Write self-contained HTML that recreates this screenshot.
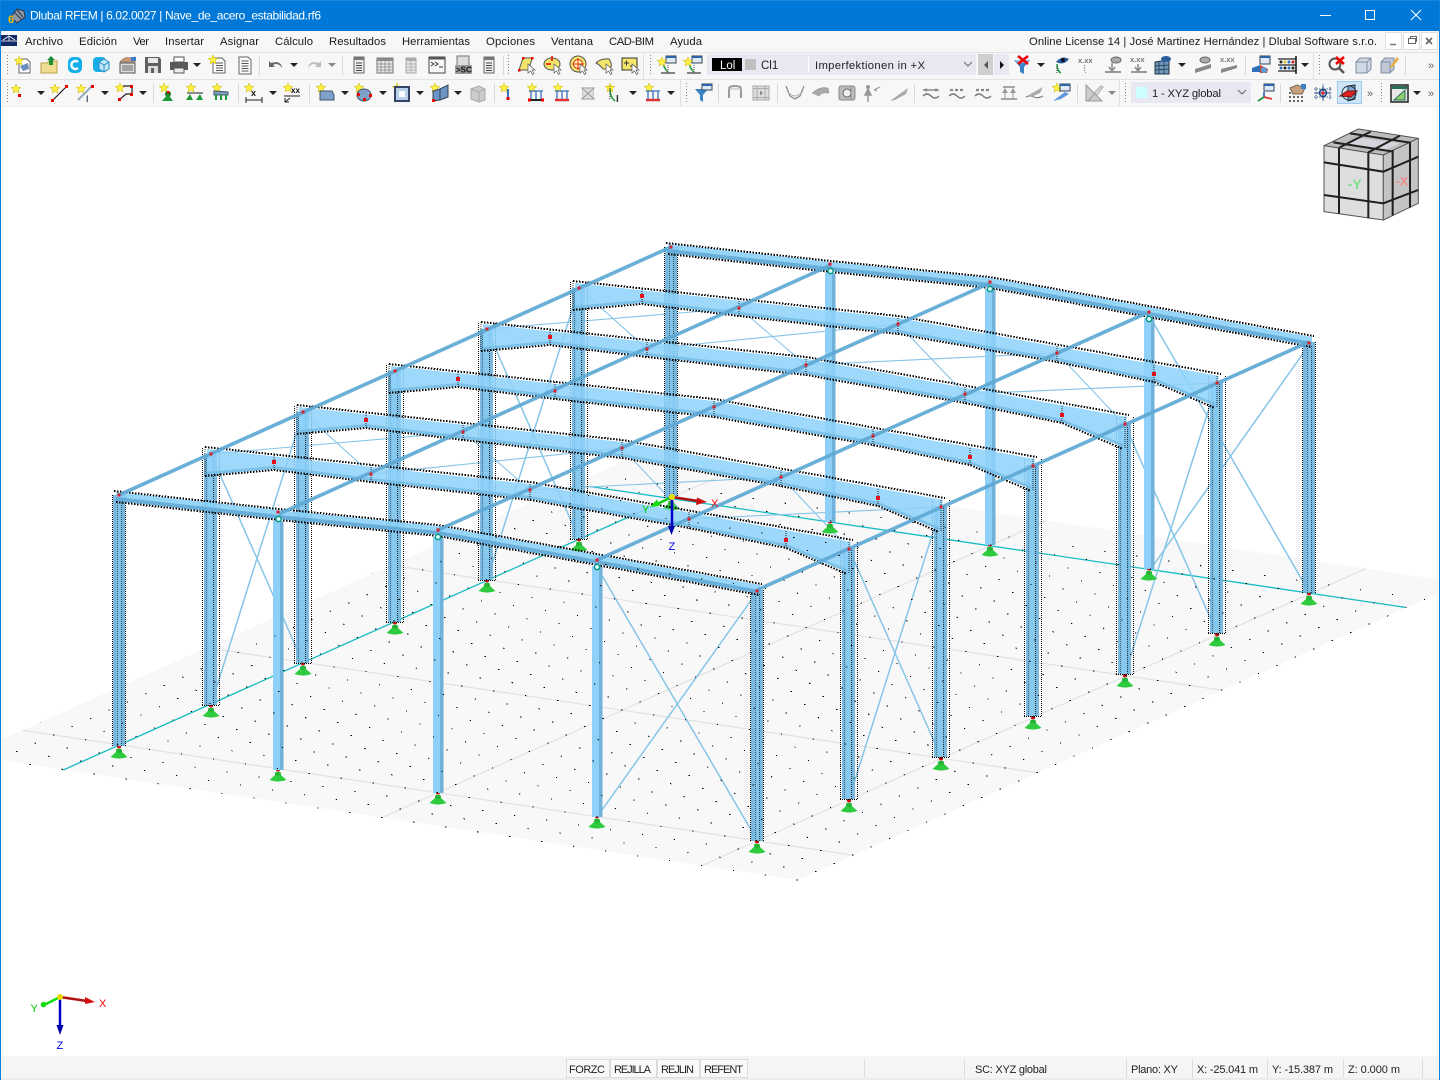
<!DOCTYPE html>
<html lang="es"><head><meta charset="utf-8"><title>Dlubal RFEM</title>
<style>
html,body{margin:0;padding:0;background:#fff;overflow:hidden}
svg{display:block;font-family:"Liberation Sans",sans-serif}
.m{font-size:11.3px;fill:#1a1a1a}
.s{font-size:11px;fill:#222}
.d{shape-rendering:crispEdges}
</style></head><body>
<svg width="1440" height="1080" viewBox="0 0 1440 1080" xmlns="http://www.w3.org/2000/svg">
<defs>
<polygon id="st" points="5,0 6.2,3 9.8,3.4 7.2,5.6 8,9 5,7.2 2,9 2.8,5.6 .2,3.4 3.8,3" fill="#ffee44" stroke="#c9b800" stroke-width=".5"/>
<path id="dd" d="M-4-2h8l-4 4z" fill="#222"/>
<path id="dg" d="M-4-2h8l-4 4z" fill="#888"/>
<g id="i-new"><path d="M6 4h8l3 3v11H6z" fill="#fff" stroke="#666"/><path d="M7 11l8-3 1 6-6 2z" fill="#6d8fc0"/><use href="#st" x="1" y="1"/></g>
<g id="i-fold"><path d="M2 8h6l2-2h8v12H2z" fill="#f0dc90" stroke="#b89f50"/><path d="M12 1l4 4h-2v5h-4V5H8z" fill="#1d8f3a"/></g>
<g id="i-c"><rect x="3" y="2" width="14" height="16" rx="5" fill="#12aee8"/><path d="M13 7a4 4 0 1 0 0 6" fill="none" stroke="#fff" stroke-width="2.4"/></g>
<g id="i-cube"><rect x="2" y="2" width="13" height="15" rx="4" fill="#15aee6"/><path d="M8 7l5-3 5 3v7l-5 3-5-3z" fill="#bfe7f7" stroke="#2a8cc0"/><path d="M8 7l5 3 5-3M13 10v7" fill="none" stroke="#2a8cc0"/></g>
<g id="i-hand"><rect x="3" y="8" width="15" height="10" fill="#ddd" stroke="#555"/><path d="M5 11h11M5 13h11M5 15h11" stroke="#666"/><path d="M3 7q5-6 10-4l5-1v5H5z" fill="#c69878" stroke="#7a5a45" stroke-width=".6"/><path d="M14 2h5v4h-5z" fill="#3d7fc4"/></g>
<g id="i-save"><path d="M2 2h14l2 2v14H2z" fill="#606060"/><rect x="5" y="3" width="10" height="5" fill="#e8e8e8"/><rect x="5" y="11" width="10" height="7" fill="#ddd"/><rect x="8" y="13" width="3" height="5" fill="#606060"/></g>
<g id="i-print"><rect x="5" y="2" width="10" height="5" fill="#fff" stroke="#555"/><path d="M1 7h18v8h-4v-2H5v2H1z" fill="#5a5a5a"/><rect x="5" y="13" width="10" height="5" fill="#eee" stroke="#555"/></g>
<g id="i-docn"><path d="M5 3h9l3 3v12H5z" fill="#fafafa" stroke="#666"/><path d="M8 8h7M8 10.500h7M8 13h7M8 15.500h7" stroke="#555"/><use href="#st" x="0" y="0"/></g>
<g id="i-doc"><path d="M4 2h9l3 3v14H4z" fill="#fafafa" stroke="#666"/><path d="M6.500 6h7M6.500 8.500h7M6.500 11h7M6.500 13.500h7M6.500 16h7" stroke="#555"/></g>
<g id="i-undo"><path d="M3 6v6h6l-2-2q5-3 9 3-1-8-11-5z" fill="#666"/></g>
<g id="i-redo"><path d="M17 6v6h-6l2-2q-5-3-9 3 1-8 11-5z" fill="#bbb"/></g>
<g id="i-t1"><rect x="5" y="2" width="10" height="16" fill="#eee" stroke="#666"/><rect x="5" y="2" width="10" height="3" fill="#777"/><path d="M7 8h6M7 10.500h6M7 13h6M7 15.500h6" stroke="#444"/></g>
<g id="i-t2"><rect x="2" y="3" width="16" height="15" fill="#e8e8e8" stroke="#777"/><rect x="2" y="3" width="16" height="3" fill="#888"/><path d="M2 9h16M2 12h16M2 15h16M6 6v12M10 6v12M14 6v12" stroke="#888" stroke-width=".8"/></g>
<g id="i-t3"><rect x="5" y="3" width="10" height="15" fill="#e4e4e4" stroke="#aaa"/><rect x="5" y="3" width="10" height="3" fill="#aaa"/><path d="M5 9h10M5 12h10M5 15h10M10 6v12" stroke="#aaa" stroke-width=".8"/></g>
<g id="i-term"><rect x="2" y="2" width="16" height="16" fill="#f8f8f8" stroke="#444"/><rect x="2" y="2" width="16" height="2.500" fill="#555"/><path d="M4 7l3 2-3 2M8 7l3 2-3 2M12 12h4" fill="none" stroke="#333"/></g>
<g id="i-sc"><rect x="4" y="1" width="12" height="10" fill="#ddd" stroke="#777"/><rect x="2" y="10" width="17" height="9" rx="1" fill="#999"/><text x="3" y="17.500" font-size="8" font-weight="bold" fill="#111">&gt;SC</text></g>
<g id="cur"><path d="M11 9v9l2.500-2 2 3.500 1.500-1-2-3.500h3z" fill="#fff" stroke="#555" stroke-width=".7"/></g>
<g id="y1"><path d="M6 3h9l-3 12H2z" fill="#f3e46a" stroke="#555"/><rect x="5" y="2" width="2.500" height="2.500" fill="#e00"/><rect x="14" y="2" width="2.500" height="2.500" fill="#e00"/><rect x="1" y="14" width="2.500" height="2.500" fill="#e00"/><use href="#cur"/></g>
<g id="y2"><ellipse cx="9" cy="9" rx="8" ry="6" fill="#f3e46a" stroke="#555"/><path d="M9 1v5M3 9h5" stroke="#e00" stroke-width="1.500"/><use href="#cur"/></g>
<g id="y3"><circle cx="9" cy="9" r="8" fill="#f3e46a" stroke="#555"/><circle cx="9" cy="9" r="4.500" fill="#fff4a0" stroke="#c33"/><path d="M9 3v12M3 9h12" stroke="#e00" stroke-width=".8"/><use href="#cur"/></g>
<g id="y4"><path d="M1 8q5-5 13-4 4 6 1 10H8q-3-4-7-6z" fill="#f3e46a" stroke="#555"/><use href="#cur"/></g>
<g id="y5"><rect x="1" y="3" width="15" height="12" fill="#f3e46a" stroke="#333"/><path d="M3 8h5M5.500 5.500v5M9 11h5" stroke="#333"/><use href="#cur"/></g>
<g id="w1"><path d="M4 18h14" stroke="#111"/><rect x="9" y="1" width="10" height="7" fill="#dfe8f5" stroke="#345"/><rect x="9" y="1" width="10" height="2" fill="#2d63a8"/><path d="M6 5q0 8 5 12" fill="none" stroke="#1c9a3c" stroke-width="1.500"/><use href="#st" x="0" y="2"/><path d="M11 10v8" stroke="#555" stroke-dasharray="1 1"/></g>
<g id="i-fx"><path d="M2 5h16l-6 7v7l-4-2v-5z" fill="#3b83c9"/><path d="M3 5h14l-3 3H6z" fill="#9cc8ec"/></g>
<g id="i-eye"><path d="M6 9q0 7 4 9" fill="none" stroke="#1c9a3c" stroke-width="1.600"/><path d="M5 7q6-7 13-3-5 7-13 3z" fill="#2b5d9e"/><circle cx="12" cy="5" r="2" fill="#112"/><path d="M6 11v7" stroke="#333" stroke-dasharray="1 1"/></g>
<g id="i-xxx"><text x="1" y="8" font-size="7.500" font-weight="bold" fill="#777">x.xx</text><path d="M8 10q-2 4 1 8" fill="none" stroke="#888" stroke-dasharray="1.500 1"/></g>
<g id="i-up"><path d="M2 17h16" stroke="#999" stroke-width="2"/><path d="M9 8v6M6 12l3 4 3-4" fill="none" stroke="#888" stroke-width="1.500"/><ellipse cx="13" cy="5" rx="5" ry="3" fill="#aaa" stroke="#666"/></g>
<g id="i-upx"><path d="M2 17h16" stroke="#999" stroke-width="2"/><path d="M9 9v6M6 12l3 4 3-4" fill="none" stroke="#888" stroke-width="1.500"/><text x="1" y="7" font-size="7.500" font-weight="bold" fill="#777">x.xx</text></g>
<g id="i-grid"><path d="M2 7l14-2v14H2z" fill="#6d97bd" stroke="#234"/><path d="M6 6.500V19M11 6V19M2 11l14-1M2 15l14-1" stroke="#234" stroke-width=".7"/><ellipse cx="13" cy="4" rx="5" ry="3" fill="#2b5d9e"/></g>
<g id="i-sl1"><path d="M2 14l16-5v4l-16 5z" fill="#888"/><ellipse cx="12" cy="5" rx="5" ry="3" fill="#aaa" stroke="#666"/></g>
<g id="i-sl2"><path d="M2 14l16-4v3l-16 5z" fill="#888"/><text x="1" y="7" font-size="7.500" font-weight="bold" fill="#777">x.xx</text></g>
<g id="i-w2"><rect x="9" y="1" width="10" height="8" fill="#dfe8f5" stroke="#345"/><rect x="9" y="1" width="10" height="2" fill="#2d63a8"/><path d="M1 13l8-3v7H1z" fill="#2c6fb8"/><path d="M9 10l8 4-1 4H9z" fill="#cc4436"/><circle cx="13" cy="15" r="3" fill="#5d9ad8"/></g>
<g id="i-abac"><path d="M1 4h18M1 10h18M1 16h18" stroke="#222" stroke-width="1.200"/><path d="M19 1v18" stroke="#111" stroke-width="1.500"/><circle cx="4" cy="7" r="1.500" fill="#222"/><circle cx="8" cy="7" r="1.500" fill="#e8c020"/><circle cx="12" cy="7" r="1.500" fill="#2a70c0"/><circle cx="16" cy="7" r="1.500" fill="#c22"/><circle cx="4" cy="13" r="1.500" fill="#2a70c0"/><circle cx="8" cy="13" r="1.500" fill="#222"/><circle cx="12" cy="13" r="1.500" fill="#2a70c0"/><circle cx="16" cy="13" r="1.500" fill="#222"/></g>
<g id="i-zx"><circle cx="8" cy="9" r="5.500" fill="none" stroke="#555" stroke-width="2"/><path d="M12 13l5 5" stroke="#555" stroke-width="2.500"/><path d="M9 2l8 7M17 2l-8 7" stroke="#e00" stroke-width="2.500"/></g>
<g id="i-bx"><path d="M3 7l4-4h11v11l-4 4H3z" fill="#d0d8e4" stroke="#8090a4"/><path d="M3 7h11v11M14 7l4-4" fill="none" stroke="#8090a4"/></g>
<g id="i-bxp"><path d="M2 7l4-4h9v11l-4 4H2z" fill="#c0c8d8" stroke="#8090a4"/><path d="M2 7h9v11" fill="none" stroke="#8090a4"/><path d="M11 12l7-10 2 2-7 9z" fill="#e8b040"/></g>
<g id="i-n1"><use href="#st" x="1" y="1"/><rect x="8" y="11" width="3" height="3" fill="#e00"/></g>
<g id="i-n2"><use href="#st" x="1" y="1"/><path d="M3 18L18 3" stroke="#222" stroke-width="1.200"/><rect x="16" y="2" width="3" height="3" fill="#e00"/><rect x="2" y="16" width="3" height="3" fill="#e00"/></g>
<g id="i-n3"><use href="#st" x="1" y="1"/><path d="M3 17L17 3" stroke="#9ab" stroke-width="2"/><text x="11" y="19" font-size="9" font-weight="bold" fill="#556">I</text><rect x="16" y="2" width="3" height="3" fill="#e00"/></g>
<g id="i-n4"><use href="#st" x="0" y="0"/><path d="M8 3h9v8l-6 0-7 6" fill="none" stroke="#222" stroke-width="1.200"/><rect x="15" y="2" width="3" height="3" fill="#e00"/><rect x="15" y="10" width="3" height="3" fill="#e00"/><rect x="3" y="15" width="3" height="3" fill="#e00"/></g>
<g id="i-n5"><use href="#st" x="1" y="0"/><circle cx="10" cy="11" r="3" fill="#137a2a"/><path d="M10 11l5 7H4z" fill="#1d9a38"/><rect x="9" y="8" width="2.500" height="2.500" fill="#e00"/></g>
<g id="i-n6"><use href="#st" x="1" y="0"/><path d="M2 10h16" stroke="#222"/><path d="M5 11l3 6H1zM15 11l3 6h-7z" fill="#1d9a38"/></g>
<g id="i-n7"><use href="#st" x="1" y="0"/><path d="M3 8l14 1v3H3z" fill="#7a9ec0" stroke="#456"/><path d="M5 12v5M10 12v5M15 12v5" stroke="#1d9a38" stroke-width="2"/></g>
<g id="i-n8"><use href="#st" x="0" y="0"/><path d="M2 17h16M2 14v6M18 14v6" stroke="#222"/><text x="7" y="13" font-size="9" font-weight="bold" fill="#111">x</text></g>
<g id="i-n9"><use href="#st" x="1" y="0"/><path d="M2 13h16" stroke="#222"/><text x="9" y="10" font-size="8" font-weight="bold" fill="#111">xx</text><path d="M8 15l-5 4M3 15v4h4" fill="none" stroke="#222"/></g>
<g id="i-s1"><use href="#st" x="0" y="0"/><path d="M4 8h12l2 4v5H4z" fill="#7ea1cc" stroke="#456"/></g>
<g id="i-s2"><use href="#st" x="0" y="0"/><ellipse cx="10" cy="12" rx="7" ry="6" fill="#7ea1cc" stroke="#456"/><rect x="3" y="10" width="3" height="3" fill="#e00"/><rect x="9" y="15" width="3" height="3" fill="#e00"/><rect x="15" y="11" width="3" height="3" fill="#e00"/></g>
<g id="i-s3"><use href="#st" x="0" y="0"/><rect x="3" y="4" width="14" height="14" fill="#b8d0e8" stroke="#346" stroke-width="2"/><rect x="7" y="8" width="6" height="6" fill="#fff"/></g>
<g id="i-s4"><use href="#st" x="0" y="0"/><path d="M3 8l7-2v11l-7 1zM10 6l8-4v12l-8 3z" fill="#6d94c4" stroke="#345"/><rect x="2" y="16" width="3" height="3" fill="#e00"/></g>
<g id="i-g1"><path d="M3 6l8-3 6 3v11l-6 2-8-3z" fill="#ccc" stroke="#aaa"/><path d="M3 6l8 3 6-3M11 9v10" fill="none" stroke="#aaa"/></g>
<g id="i-l1"><use href="#st" x="1" y="0"/><path d="M10 6v8" stroke="#3a70c0" stroke-width="2"/><rect x="8.500" y="14" width="3" height="3" fill="#e00"/></g>
<g id="i-l2"><use href="#st" x="1" y="0"/><path d="M3 17h14" stroke="#222" stroke-width="2"/><path d="M5 8v8M10 8v8M15 8v8M3 8h14" stroke="#3a70c0" stroke-width="1.300"/><rect x="2" y="15.500" width="3" height="3" fill="#e00"/><rect x="15" y="15.500" width="3" height="3" fill="#e00"/></g>
<g id="i-l3"><use href="#st" x="1" y="0"/><path d="M3 17h14" stroke="#e03030" stroke-width="2.500"/><path d="M5 8v8M10 8v8M15 8v8M3 8h14" stroke="#3a70c0" stroke-width="1.300"/></g>
<g id="i-l4"><path d="M3 16h14M3 5h14M5 5v11M10 5v11M15 5v11" stroke="#aaa" stroke-width="1.300"/><rect x="5" y="6" width="10" height="9" fill="#ddd"/><path d="M5 6l10 9M15 6L5 15" stroke="#999"/></g>
<g id="i-l5"><use href="#st" x="0" y="0"/><path d="M5 6q0 8 5 12" fill="none" stroke="#1c9a3c" stroke-width="1.500"/><text x="11" y="19" font-size="10" font-weight="bold" fill="#333">I</text><path d="M5 3v14" stroke="#333" stroke-dasharray="1 1"/></g>
<g id="i-f"><path d="M2 6h13l-5 6v7l-3-2v-5z" fill="#3b83c9"/><rect x="9" y="1" width="10" height="6" fill="#dfe8f5" stroke="#345"/><rect x="9" y="1" width="10" height="2" fill="#2d63a8"/></g>
<g id="i-fr"><path d="M4 15V6q0-3 6-3t6 3v9" fill="none" stroke="#999" stroke-width="2"/><path d="M3 6h14" stroke="#bbb"/></g>
<g id="i-film"><rect x="2" y="3" width="16" height="14" fill="#ddd" stroke="#aaa"/><path d="M2 5.500h16M2 14.500h16M6 3v14M14 3v14" stroke="#aaa"/><path d="M9 7.500l3 2.500-3 2.500z" fill="#888"/></g>
<g id="i-g2"><path d="M1 3l4 10 5 3 5-3 4-10" fill="none" stroke="#888" stroke-width="1.200"/><path d="M2 8q8 10 16 0" fill="none" stroke="#aaa"/></g>
<g id="i-g3"><path d="M1 10q8-7 16-5l1 5q-8-1-10 3z" fill="#aaa" stroke="#888" stroke-width=".5"/></g>
<g id="i-g4"><rect x="2" y="3" width="16" height="14" rx="2" fill="#bbb" stroke="#888"/><circle cx="10" cy="10" r="4" fill="#eee" stroke="#666"/><path d="M14 3v14" stroke="#888"/></g>
<g id="i-g5"><circle cx="5" cy="4" r="2" fill="#999"/><path d="M5 6l3 6H2zM5 12v7" stroke="#999" stroke-width="1.500" fill="#999"/><path d="M11 7l6-3M11 7l3-2M11 7l3 1" stroke="#999"/></g>
<g id="i-g6"><path d="M1 18L19 5 17 11 6 17z" fill="#aaa"/></g>
<g id="i-h1"><path d="M2 7h16M2 13q4-4 8 0t8 0" fill="none" stroke="#777" stroke-width="1.300"/><circle cx="5" cy="7" r="1.500" fill="#888"/><circle cx="15" cy="7" r="1.500" fill="#888"/></g>
<g id="i-h2"><path d="M2 13q4-4 8 0t8 0" fill="none" stroke="#777" stroke-width="1.300"/><path d="M3 7h14" stroke="#888" stroke-width="2.200" stroke-dasharray="3 2"/></g>
<g id="i-h3"><path d="M2 16h16M4 4h12" stroke="#777" stroke-width="1.300"/><path d="M6 5l3 5H3zM14 5l3 5h-6z" fill="#999"/><path d="M6 10v5M14 10v5" stroke="#999"/></g>
<g id="i-h4"><path d="M1 14q5-2 8 0t9-1" fill="none" stroke="#777"/><path d="M2 13L18 4l-3 6-9 4z" fill="#aaa"/></g>
<g id="i-h5"><use href="#st" x="1" y="0"/><rect x="9" y="1" width="10" height="7" fill="#dfe8f5" stroke="#345"/><rect x="9" y="1" width="10" height="2" fill="#2d63a8"/><path d="M2 18L14 9l4 2-8 5z" fill="#5f96dc"/></g>
<g id="i-d1"><path d="M2 2v16h16z" fill="#ccc" stroke="#999"/><path d="M4 18L18 3" stroke="#999"/><path d="M10 10l7-7 2 1-6 8z" fill="#ddd" stroke="#aaa"/></g>
<g id="i-cs"><rect x="9" y="1" width="10" height="7" fill="#dfe8f5" stroke="#345"/><rect x="9" y="1" width="10" height="2" fill="#2d63a8"/><path d="M9 9v5" stroke="#1c4fb0" stroke-width="1.500"/><path d="M9 14l8 2" stroke="#d33" stroke-width="1.800"/><path d="M9 14l-6 4" stroke="#1c9a3c" stroke-width="1.800"/></g>
<g id="i-m1"><g fill="#666"><rect x="2" y="9" width="2" height="2"/><rect x="6" y="9" width="2" height="2"/><rect x="10" y="9" width="2" height="2"/><rect x="14" y="9" width="2" height="2"/><rect x="2" y="13" width="2" height="2"/><rect x="6" y="13" width="2" height="2"/><rect x="10" y="13" width="2" height="2"/><rect x="14" y="13" width="2" height="2"/><rect x="2" y="17" width="2" height="2"/><rect x="6" y="17" width="2" height="2"/><rect x="10" y="17" width="2" height="2"/><rect x="14" y="17" width="2" height="2"/></g><path d="M3 5l7-3 8 3-3 6H6z" fill="#c9a080" stroke="#765"/><path d="M14 1h5v5h-5z" fill="#3b83c9"/></g>
<g id="i-m2"><path d="M3 4v13M10 1v18M17 4v13M1 6h18M1 10h18M1 14h18" stroke="#123b7c" stroke-width=".8" stroke-dasharray="1.500 1"/><circle cx="10" cy="10" r="3.500" fill="#fff" stroke="#123b7c" stroke-width="1.400"/><path d="M3 10h14M10 3v14" stroke="#123b7c"/><rect x="8.500" y="8.500" width="3" height="3" fill="#d22"/></g>
<g id="i-m3"><path d="M9 3l7-1v14l-7 2z" fill="#7ea8d0" stroke="#234"/><path d="M1 13l7-5h10l-6 6z" fill="#d22" stroke="#811"/><circle cx="10" cy="10" r="7" fill="none" stroke="#234"/></g>
<g id="i-tri"><rect x="2" y="2" width="17" height="17" fill="#e8e8e8" stroke="#222" stroke-width="1.500"/><path d="M3 3h15v3H3z" fill="#2a6d58"/><path d="M16 7v10H5z" fill="#8dd06d" stroke="#2a6d58"/></g>
<g id="hdl"><path d="M0 0h1v1H0zM0 3h1v1H0zM0 6h1v1H0zM0 9h1v1H0zM0 12h1v1H0zM0 15h1v1H0zM0 18h1v1H0z" fill="#888"/></g>

<g id="sup"><path d="M-2.500-8H2.500L3-5L8.500 0Q4 1.600 0 1.600T-8.500 0L-3-5Z" fill="#2fcb3f"/><path d="M-2.500-8H2.500L3-5 0-4-3-5Z" fill="#25b535"/><circle cy="-10.500" r="2" fill="#e00" stroke="#555" stroke-width=".4"/></g>

<g id="nd"><rect x="-2" y="-2" width="4" height="4" fill="#e8101a"/></g>
<g id="ns"><rect x="-1.500" y="-1.500" width="3" height="3" fill="#d8202a"/></g>

<g id="colW">
<rect x="-7" y="0" width="13" height="251" fill="#6cb0d9" fill-opacity=".9"/>
<rect x="-3.500" y="0" width="6" height="251" fill="#8accf2" fill-opacity=".8"/>
<path class="d" d="M-8.500 -6V251M8.500 -6V251" stroke="#000" stroke-width="1" stroke-dasharray="1 1" fill="none"/>
<path class="d" d="M2.500 0V251" stroke="#000" stroke-opacity=".8" stroke-width="1" stroke-dasharray="1 1" fill="none"/>
<path class="d" d="M-4.500 0V251" stroke="#000" stroke-opacity=".4" stroke-width="1" stroke-dasharray="1 1" fill="none"/>
<path class="d" d="M-9 251.500h17" stroke="#000" stroke-dasharray="1 1"/>
</g>
<g id="colN">
<rect x="-6" y="0" width="12" height="251" fill="#6cb0d9" fill-opacity=".9"/>
<rect x="-2.500" y="0" width="4.500" height="251" fill="#86c8ee" fill-opacity=".8"/>
<path class="d" d="M-6.500 0V251M6.500 0V251" stroke="#000" stroke-width="1" stroke-dasharray="1 1" fill="none"/>
<path class="d" d="M-1.500 0V251M2.500 0V251" stroke="#000" stroke-opacity=".6" stroke-width="1" stroke-dasharray="1 1" fill="none"/>
</g>

<g id="inner">
<use href="#sup" x="0" y="262"/><use href="#sup" x="638" y="357"/>
<use href="#colW" x="0" y="0"/>
<use href="#colW" x="638" y="94"/>
<path d="M-4 -5L319 30L640 88L636 118L575 93L478 73L319 45L160 27L63 15L-4 21Z" fill="#8ed2fa" fill-opacity=".86"/>
<path d="M-4 21L63 15L160 27L319 45L478 73L575 93L636 118L636 115L575 90L478 70L319 42L160 24L63 12L-4 18Z" fill="#6fb6df" fill-opacity=".7"/>
<path class="d" d="M-6 -7L319 28L642 86M-6 22L63 16L160 28L319 46L478 74L575 94L636 120" fill="none" stroke="#000" stroke-width="2" stroke-dasharray="1.500 1.500"/>
<path class="d" d="M-6 -7V22M63 1V17M160 11V29M319 28V47M478 58V75M575 77V95M638 88V120" fill="none" stroke="#000" stroke-dasharray="1 1" stroke-opacity=".8"/>
</g>
<g id="nI"><use href="#ns"/><use href="#nd" x="63" y="8"/><use href="#ns" x="160" y="20"/><use href="#ns" x="319" y="36"/><use href="#ns" x="478" y="65"/><use href="#nd" x="575" y="86"/><use href="#ns" x="638" y="95"/></g>

<g id="gable">
<use href="#sup" x="0" y="262"/><use href="#sup" x="638" y="357"/>
<use href="#sup" x="159" y="285"/><use href="#sup" x="319" y="308"/><use href="#sup" x="478" y="332"/>
<g>
<rect x="154" y="26" width="7" height="249" fill="#8ed0f8"/><rect x="161" y="26" width="3.500" height="249" fill="#70b2da"/>
<rect x="314" y="42" width="7" height="256" fill="#8ed0f8"/><rect x="321" y="42" width="3.500" height="256" fill="#70b2da"/>
<rect x="473" y="71" width="7" height="251" fill="#8ed0f8"/><rect x="480" y="71" width="3.500" height="251" fill="#70b2da"/>
</g>
<use href="#colN" x="0" y="0"/>
<use href="#colN" x="638" y="95"/>
<path d="M-3 -3L160 15L319 31L478 60L641 90L641 99L478 69L319 40L160 24L-3 6Z" fill="#8ad0f8" fill-opacity=".88"/>
<path d="M-3 6L160 24L319 40L478 69L641 99L641 95L478 65L319 36L160 20L-3 2Z" fill="#5fa7d2" fill-opacity=".85"/>
<path class="d" d="M-5 -4L160 14L319 30L478 59L643 89M-3 7L160 25L319 41L478 70L640 100" fill="none" stroke="#000" stroke-width="2" stroke-dasharray="1.500 1.500"/>
</g>
<g id="nG"><use href="#ns"/><use href="#ns" x="159" y="17"/><use href="#ns" x="319" y="35"/><use href="#ns" x="478" y="65"/><use href="#ns" x="638" y="96"/>
<circle cx="159.500" cy="24" r="2.600" fill="#dff" stroke="#0c9a8a" stroke-width="1.500"/>
<circle cx="319" cy="42" r="2.600" fill="#dff" stroke="#0c9a8a" stroke-width="1.500"/>
<circle cx="478" cy="72" r="2.600" fill="#dff" stroke="#0c9a8a" stroke-width="1.500"/></g>
</defs>

<!-- window background -->
<rect width="1440" height="1080" fill="#fff"/>
<rect width="1440" height="31" fill="#0078d7"/>
<rect y="0" width="1440" height="1" fill="#1a86dc"/>

<!-- PLATE -->
<polygon points="798,880 1462,583 631,458 -33,755" fill="#f8f8f8"/>
<path d="M702 865.600L1366 568.600M382.500 817.500L1046.500 520.500M63.300 770L671.800 497.750M671.800 497.750L727 473" stroke="#e2e2e2" stroke-width="1.200" fill="none"/>
<path d="M853.330 855.250L22.330 730.250M1037.780 772.750L206.780 647.750M1222.220 690.250L391.220 565.250M590 487L575 484.700" stroke="#e2e2e2" stroke-width="1.200" fill="none"/>
<path d="M63.300 770L671.800 497.750M1405 607.300L590 486.500" stroke="#19bcc4" stroke-width="1.300" fill="none"/>

<!-- BRACING -->
<g stroke="#86c5e8" stroke-width="1.500" fill="none">
<path d="M1150 317L1309 592M1309 345L1150 570"/>
<path d="M487 329L579 539M579 288L487 580"/>
<path d="M1125 425L1217 633M1217 383L1125 674"/>
<path d="M487 329L739 308M647 349L579 288M647 349L898 324M739 308L806 365M806 365L1057 353M898 324L965 394M965 394L1217 383M1057 353L1125 425" stroke-width="1.100"/>
<path d="M211 454L463 432M371 474L303 412M371 474L622 448M463 432L530 490M530 490L781 477M622 448L689 519M689 519L941 507M781 477L849 549" stroke-width="1.100"/>
<path d="M211 454L303 663M303 412L211 705"/>
<path d="M849 549L941 757M941 507L849 799"/>
</g>

<!-- FRAMES back to front -->
<use href="#gable" x="671" y="247"/>
<use href="#inner" x="579" y="288"/>
<use href="#inner" x="487" y="329"/>
<use href="#inner" x="395" y="371"/>
<use href="#inner" x="303" y="412"/>
<use href="#inner" x="211" y="454"/>
<g stroke="#86c5e8" stroke-width="1.500" fill="none"><path d="M597 567L757 840M757 592L597 817"/></g>
<use href="#gable" x="119" y="495"/>

<!-- LONGITUDINAL -->
<g stroke="#5da8d4" stroke-width="3.600" stroke-opacity=".92" fill="none">
<path d="M119 495L671 247"/>
<path d="M279 514L831 265"/>
<path d="M438 530L990 283"/>
<path d="M597 560L1149 312"/>
<path d="M757 590L1309 342"/>
</g>
<use href="#nG" x="671" y="247"/><use href="#nI" x="579" y="288"/><use href="#nI" x="487" y="329"/><use href="#nI" x="395" y="371"/><use href="#nI" x="303" y="412"/><use href="#nI" x="211" y="454"/><use href="#nG" x="119" y="495"/>

<!-- GRID DOTS -->
<path class="d" fill="none" stroke="#000" stroke-width="1" stroke-dasharray="1.300 31.020" d="M798 880l-831-125M816.440 871.750l-831-125M834.890 863.500l-831-125M853.330 855.250l-831-125M871.780 847l-831-125M890.220 838.750l-831-125M908.670 830.500l-831-125M927.110 822.250l-831-125M945.560 814l-831-125M964 805.750l-831-125M982.440 797.500l-831-125M1000.890 789.250l-831-125M1019.330 781l-831-125M1037.780 772.750l-831-125M1056.220 764.500l-831-125M1074.670 756.250l-831-125M1093.110 748l-831-125M1111.560 739.750l-831-125M1130 731.500l-831-125M1148.440 723.250l-831-125M1166.890 715l-831-125M1185.330 706.750l-831-125M1203.780 698.500l-831-125M1222.220 690.250l-831-125M1240.670 682l-831-125M1259.110 673.750l-831-125M1277.560 665.500l-831-125M1296 657.250l-831-125M1314.440 649l-831-125M1332.890 640.750l-831-125M1351.330 632.500l-831-125M1369.780 624.250l-831-125M1388.220 616l-831-125M1406.670 607.750l-831-125M1425.110 599.500l-831-125"/>

<!-- SCENE AXES -->
<g>
<path d="M672 497L698 501" stroke="#b01010" stroke-width="2.500"/><path d="M697 497.500L707 502 696 505z" fill="#d01010"/>
<path d="M672 497L655 505" stroke="#11cc11" stroke-width="2.500"/><path d="M657 499.500L650 507 660 506z" fill="#11dd11"/>
<path d="M672 497V527" stroke="#0000c8" stroke-width="2.500"/><path d="M668 526h7l-3.500 9z" fill="#0000a8"/>
<circle cx="672" cy="497" r="3" fill="#e8e000"/>
<text x="711" y="507" font-size="11" fill="#e00">X</text>
<text x="642" y="513" font-size="11" fill="#0c0">Y</text>
<text x="668.500" y="550" font-size="11" fill="#00e">Z</text>
</g>

<!-- CORNER AXES -->
<g>
<path d="M60 997L87 1001" stroke="#b01010" stroke-width="2.500"/><path d="M85 997L95 1002 85 1004z" fill="#d01010"/>
<path d="M60 997L44 1005" stroke="#11dd11" stroke-width="2.500"/><circle cx="43.500" cy="1004.500" r="2.800" fill="#11dd11"/>
<path d="M60 997V1027" stroke="#0000c8" stroke-width="2.500"/><path d="M56.500 1025h7l-3.500 10z" fill="#0000a8"/>
<circle cx="60" cy="997" r="3" fill="#e8d800"/>
<text x="99" y="1007" font-size="11" fill="#e00">X</text>
<text x="30.500" y="1012" font-size="11" fill="#0c0">Y</text>
<text x="56.500" y="1049" font-size="11" fill="#00e">Z</text>
</g>

<!-- NAV CUBE -->
<g transform="translate(1300 115) scale(.3333)">
<path d="M72 92L175 42 355 70 250 120z" fill="#bdbdbd" stroke="#555" stroke-width="3" stroke-linejoin="round"/>
<path d="M72 92L250 120 250 315 72 290z" fill="#dedede" stroke="#555" stroke-width="3" stroke-linejoin="round"/>
<path d="M250 120L355 70V265L250 315z" fill="#c4c4c4" stroke="#555" stroke-width="3" stroke-linejoin="round"/>
<path d="M180 68L300 85 250 108 135 88z" fill="#d4d4da"/>
<g stroke="#1f1f1f" stroke-width="6" fill="none">
<path d="M72 142L250 170 355 125M72 240L250 265 355 225"/>
<path d="M117 98V296M205 112V310M278 105V302M330 80V278"/>
<path d="M118 98L212 50M205 112L300 62M100 82L280 110M150 55L330 83"/>
</g>
<text x="143" y="222" font-size="42" font-weight="bold" fill="#7be08a">-Y</text>
<text x="288" y="212" font-size="36" font-weight="bold" fill="#ee8a8a">-X</text>
</g>

<!-- MENU / TOOLBAR BG -->
<rect y="31" width="1440" height="76" fill="#f7f7f7"/>
<rect y="52" width="1440" height="1" fill="#e2e2e2"/>
<rect y="79" width="1440" height="1" fill="#e2e2e2"/>
<rect y="106" width="1440" height="1" fill="#f0f0f0"/>
<path d="M643.500 52v27M680.500 79v27M1119.500 79v27M1313.500 52v27" stroke="#e0e0e0"/>

<!-- TITLE -->
<g transform="translate(8 7)">
<path d="M3 10l6-8 7 2 1 6-8 6z" fill="#8d99a8" stroke="#2e3a4a"/><path d="M6 5l7 7M9 3l6 7" stroke="#2e3a4a"/>
<text x="0" y="16" font-size="11" font-weight="bold" fill="#f4c000">6</text>
</g>
<text x="30" y="19.500" font-size="12" fill="#fff" textLength="291" lengthAdjust="spacing">Dlubal RFEM | 6.02.0027 | Nave_de_acero_estabilidad.rf6</text>
<path d="M1320 15.500h11" stroke="#fff"/>
<rect x="1365.500" y="10.500" width="9" height="9" fill="none" stroke="#fff"/>
<path d="M1411 10l10 10M1421 10l-10 10" stroke="#fff"/>

<!-- MENU -->
<rect x="1" y="35" width="16" height="11" fill="#142a66"/><path d="M1 41h16M9 36v5M3 40l6-4 6 4" stroke="#fff" stroke-width=".8" fill="none"/>
<g class="m">
<text class="m" x="25" y="45" textLength="38">Archivo</text>
<text class="m" x="79" y="45" textLength="38">Edición</text>
<text class="m" x="133" y="45" textLength="16">Ver</text>
<text class="m" x="165" y="45" textLength="39">Insertar</text>
<text class="m" x="220" y="45" textLength="39">Asignar</text>
<text class="m" x="275" y="45" textLength="38">Cálculo</text>
<text class="m" x="329" y="45" textLength="57">Resultados</text>
<text class="m" x="402" y="45" textLength="68">Herramientas</text>
<text class="m" x="486" y="45" textLength="49">Opciones</text>
<text class="m" x="551" y="45" textLength="42">Ventana</text>
<text class="m" x="609" y="45" textLength="45">CAD-BIM</text>
<text class="m" x="670" y="45" textLength="32">Ayuda</text>
<text class="m" x="1029" y="45" textLength="348">Online License 14 | José Martinez Hernández | Dlubal Software s.r.o.</text>
</g>
<g fill="#fff" stroke="#e0e0e0"><rect x="1385.500" y="32.500" width="16" height="17"/><rect x="1403.500" y="32.500" width="16" height="17"/><rect x="1421.500" y="32.500" width="16" height="17"/></g>
<path d="M1390 44.500h6" stroke="#777" stroke-width="1.500"/><path d="M1408.500 38.500h7v5h-7zM1410.500 38.500v-2h6v5h-1" fill="none" stroke="#666"/><path d="M1426 38l6 6M1432 38l-6 6" stroke="#666" stroke-width="1.600"/>

<!-- TOOLBAR ROW 1 -->
<use href="#hdl" x="7" y="55"/><use href="#hdl" x="508" y="55"/><use href="#hdl" x="650" y="55"/><use href="#hdl" x="1319" y="55"/>
<use href="#i-new" x="13" y="55"/><use href="#i-fold" x="39" y="55"/><use href="#i-c" x="65" y="55"/><use href="#i-cube" x="91" y="55"/><use href="#i-hand" x="117" y="55"/><use href="#i-save" x="143" y="55"/><use href="#i-print" x="169" y="55"/><use href="#dd" x="197" y="65"/><use href="#i-docn" x="208" y="55"/><use href="#i-doc" x="235" y="55"/>
<path d="M259.500 56v19M342.500 56v19M503.500 56v19M1245.500 56v19M1405.500 56v19" stroke="#d8d8d8"/>
<use href="#i-undo" x="266" y="55"/><use href="#dd" x="294" y="65"/><use href="#i-redo" x="304" y="55"/><use href="#dg" x="332" y="65"/>
<use href="#i-t1" x="349" y="55"/><use href="#i-t2" x="375" y="55"/><use href="#i-t3" x="401" y="55"/><use href="#i-term" x="427" y="55"/><use href="#i-sc" x="453" y="55"/><use href="#i-t1" x="479" y="55"/>
<use href="#y1" x="517" y="55"/><use href="#y2" x="543" y="55"/><use href="#y3" x="569" y="55"/><use href="#y4" x="595" y="55"/><use href="#y5" x="621" y="55"/>
<use href="#w1" x="657" y="55"/><use href="#w1" x="683" y="55"/>
<rect x="707" y="54" width="269" height="21" fill="#e8e8f2"/>
<rect x="712" y="58" width="30" height="13" fill="#000"/><text x="720" y="69" font-size="11.500" fill="#fff">Lol</text>
<rect x="745" y="59" width="11" height="11" fill="#c0c0c0"/>
<text x="761" y="69" font-size="11.500" fill="#222">Cl1</text>
<path d="M808.500 57v15" stroke="#fff"/>
<text x="815" y="69" font-size="11.300" fill="#222" textLength="110">Imperfektionen in +X</text>
<path d="M964 62l4 4 4-4" fill="none" stroke="#666"/>
<rect x="978" y="54" width="15" height="21" fill="#cfcfcf"/><path d="M988 61v8l-4-4z" fill="#555"/>
<rect x="994" y="54" width="15" height="21" fill="#e8e8f2"/><path d="M1000 61v8l4-4z" fill="#111"/>
<use href="#i-fx" x="1012" y="55"/><path d="M1018 56l10 8M1028 56l-10 8" stroke="#e00" stroke-width="2.600"/><use href="#dd" x="1041" y="65"/>
<use href="#i-eye" x="1051" y="55"/><use href="#i-xxx" x="1077" y="55"/><use href="#i-up" x="1103" y="55"/><use href="#i-upx" x="1129" y="55"/><use href="#i-grid" x="1153" y="55"/><use href="#dd" x="1182" y="65"/><use href="#i-sl1" x="1193" y="55"/><use href="#i-sl2" x="1219" y="55"/>
<use href="#i-w2" x="1251" y="55"/><use href="#i-abac" x="1277" y="55"/><use href="#dd" x="1305" y="65"/>
<use href="#i-zx" x="1327" y="55"/><use href="#i-bx" x="1353" y="55"/><use href="#i-bxp" x="1379" y="55"/>
<text x="1428" y="69" font-size="11" fill="#666">»</text>

<!-- TOOLBAR ROW 2 -->
<use href="#hdl" x="7" y="83"/><use href="#hdl" x="686" y="83"/><use href="#hdl" x="1125" y="83"/><use href="#hdl" x="1381" y="83"/>
<use href="#i-n1" x="10" y="83"/><use href="#dd" x="41" y="93"/><use href="#i-n2" x="49" y="83"/><use href="#i-n3" x="75" y="83"/><use href="#dd" x="105" y="93"/><use href="#i-n4" x="115" y="83"/><use href="#dd" x="143" y="93"/>
<path d="M153.500 84v19M238.500 84v19M309.500 84v19M494.500 84v19M718.500 84v19M777.500 84v19M914.500 84v19M1077.500 84v19M1280.500 84v19" stroke="#d8d8d8"/>
<use href="#i-n5" x="158" y="83"/><use href="#i-n6" x="185" y="83"/><use href="#i-n7" x="211" y="83"/>
<use href="#i-n8" x="244" y="83"/><use href="#dd" x="273" y="93"/><use href="#i-n9" x="282" y="83"/>
<use href="#i-s1" x="316" y="83"/><use href="#dd" x="345" y="93"/><use href="#i-s2" x="354" y="83"/><use href="#dd" x="383" y="93"/><use href="#i-s3" x="392" y="83"/><use href="#dd" x="420" y="93"/><use href="#i-s4" x="430" y="83"/><use href="#dd" x="458" y="93"/><use href="#i-g1" x="468" y="83"/>
<use href="#i-l1" x="498" y="83"/><use href="#i-l2" x="526" y="83"/><use href="#i-l3" x="552" y="83"/><use href="#i-l4" x="578" y="83"/><use href="#i-l5" x="605" y="83"/><use href="#dd" x="633" y="93"/><use href="#i-l3" x="643" y="83"/><use href="#dd" x="671" y="93"/>
<use href="#i-f" x="693" y="83"/><use href="#i-fr" x="725" y="83"/><use href="#i-film" x="751" y="83"/>
<use href="#i-g2" x="785" y="83"/><use href="#i-g3" x="811" y="83"/><use href="#i-g4" x="837" y="83"/><use href="#i-g5" x="863" y="83"/><use href="#i-g6" x="889" y="83"/>
<use href="#i-h1" x="921" y="83"/><use href="#i-h2" x="947" y="83"/><use href="#i-h2" x="973" y="83"/><use href="#i-h3" x="999" y="83"/><use href="#i-h4" x="1025" y="83"/><use href="#i-h5" x="1051" y="83"/>
<use href="#i-d1" x="1084" y="83"/><use href="#dg" x="1112" y="93"/>
<rect x="1131" y="82" width="120" height="21" fill="#e8e8f2"/>
<rect x="1136" y="87" width="11" height="11" fill="#ccffff"/>
<text x="1152" y="97" font-size="11.300" fill="#222" textLength="69">1 - XYZ global</text>
<path d="M1238 90l4 4 4-4" fill="none" stroke="#666"/>
<use href="#i-cs" x="1255" y="83"/>
<use href="#i-m1" x="1287" y="83"/><use href="#i-m2" x="1313" y="83"/>
<rect x="1337.500" y="81.500" width="24" height="22" fill="#cfe4f7" stroke="#9ccbf0"/><use href="#i-m3" x="1339" y="83"/>
<text x="1367" y="97" font-size="11" fill="#666">»</text>
<use href="#i-tri" x="1389" y="83"/><use href="#dd" x="1417" y="93"/>
<text x="1428" y="97" font-size="11" fill="#666">»</text>

<!-- STATUS BAR -->
<rect y="1056" width="1440" height="22" fill="#f5f5f5"/>
<rect y="1078" width="1440" height="2" fill="#ececec"/>
<g fill="#f9f9f9" stroke="#dcdcdc"><rect x="566.500" y="1059.500" width="43" height="18"/><rect x="610.500" y="1059.500" width="46" height="18"/><rect x="657.500" y="1059.500" width="42" height="18"/><rect x="700.500" y="1059.500" width="47" height="18"/></g>
<path d="M864.500 1059v19M964.500 1059v19M1126.500 1059v19M1192.500 1059v19M1267.500 1059v19M1343.500 1059v19M1422.500 1059v19" stroke="#dcdcdc"/>
<text class="s" x="569" y="1073" textLength="36">FORZC</text>
<text class="s" x="614" y="1073" textLength="37">REJILLA</text>
<text class="s" x="661" y="1073" textLength="33">REJLIN</text>
<text class="s" x="704" y="1073" textLength="39">REFENT</text>
<text class="s" x="975" y="1073" textLength="72">SC: XYZ global</text>
<text class="s" x="1131" y="1073" textLength="47">Plano: XY</text>
<text class="s" x="1197" y="1073" textLength="61">X: -25.041 m</text>
<text class="s" x="1272" y="1073" textLength="61">Y: -15.387 m</text>
<text class="s" x="1348" y="1073" textLength="52">Z: 0.000 m</text>

<!-- WINDOW BORDER -->
<rect x="0" y="0" width="1" height="1080" fill="#0f7fd9"/>
<rect x="1439" y="0" width="1" height="1080" fill="#0f7fd9"/>
</svg>
</body></html>
